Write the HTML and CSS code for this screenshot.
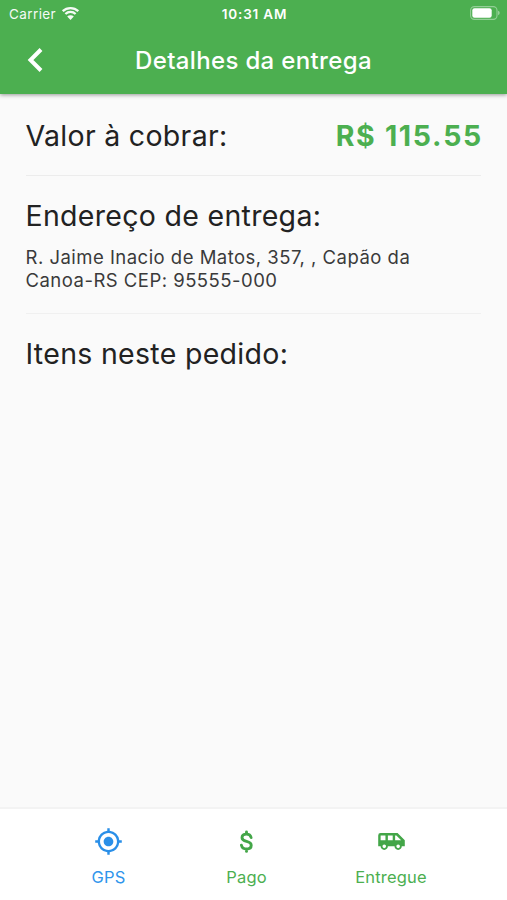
FILE: index.html
```html
<!DOCTYPE html>
<html lang="pt-BR">
<head>
    <meta charset="UTF-8">
    <meta name="viewport" content="width=device-width, initial-scale=1.0">
    <title>Detalhes da entrega</title>
    <link rel="stylesheet" href="styles.css">
</head>
<body>

<header class="topo">
    <div class="status">
        <div class="operadora">
            <span>Carrier</span>
            <svg class="wifi" viewBox="0 0 18 14">
                <path d="M1.2 5.2a11.2 11.2 0 0 1 15.6 0M3.9 8a7.3 7.3 0 0 1 10.2 0" fill="none" stroke="#fff" stroke-width="2.3"/>
                <path d="M9 14L5.7 10.6a4.7 4.7 0 0 1 6.6 0z" fill="#fff"/>
            </svg>
        </div>
        <span class="hora">10:31 AM</span>
        <svg class="bateria" viewBox="0 0 30 14">
            <rect x="0.6" y="0.6" width="26.4" height="12.8" rx="3.8" fill="none" stroke="#fff" stroke-opacity="0.4" stroke-width="1.1"/>
            <rect x="2.3" y="2.3" width="19.4" height="9.4" rx="2.2" fill="#fff"/>
            <path d="M28.2 4.8a2.4 2.4 0 0 1 0 4.4z" fill="#fff" fill-opacity="0.5"/>
        </svg>
    </div>
    <div class="barra">
        <svg class="voltar" viewBox="0 0 16 24">
            <path d="M14 1.5L3.5 12 14 22.5" fill="none" stroke="#fff" stroke-width="4"/>
        </svg>
        <h1>Detalhes da entrega</h1>
    </div>
</header>

<main>
    <section class="valor">
        <h2>Valor à cobrar:</h2>
        <strong>R$ 115.55</strong>
    </section>
    <section class="endereco">
        <h2>Endereço de entrega:</h2>
        <p>R. Jaime Inacio de Matos, 357, , Capão da<br>Canoa-RS CEP: 95555-000</p>
    </section>
    <section class="itens">
        <h2>Itens neste pedido:</h2>
    </section>
</main>

<nav>
    <a class="gps">
        <svg viewBox="0 0 24 24"><path d="M12 8c-2.21 0-4 1.79-4 4s1.79 4 4 4 4-1.79 4-4-1.79-4-4-4zm8.94 3A8.994 8.994 0 0 0 13 3.06V1h-2v2.06A8.994 8.994 0 0 0 3.06 11H1v2h2.06A8.994 8.994 0 0 0 11 20.94V23h2v-2.06A8.994 8.994 0 0 0 20.94 13H23v-2h-2.06zM12 19c-3.87 0-7-3.13-7-7s3.13-7 7-7 7 3.13 7 7-3.13 7-7 7z"/></svg>
        <span>GPS</span>
    </a>
    <a class="pago">
        <svg viewBox="0 0 24 24"><path d="M15.8 8.7C15.3 6.7 14 5.9 12 5.9c-2.3 0-3.7 1-3.7 2.9 0 4.2 7.6 2 7.6 6.300 0 2-1.5 3.1-3.9 3.1-2.3 0-3.7-1-4.2-3.1M12 5.5V4.1M12 18.5V20.2" fill="none" stroke="#43a648" stroke-width="2.4" stroke-linecap="round"/></svg>
        <span>Pago</span>
    </a>
    <a class="entregue">
        <svg viewBox="0 0 24 24"><path d="M17 5H3a2 2 0 0 0-2 2v9h2c0 1.65 1.34 3 3 3s3-1.35 3-3h5.5c0 1.65 1.34 3 3 3s3-1.35 3-3H23v-5l-6-6zM3 11V7h4v4H3zm3 6.5a1.5 1.5 0 1 1 0-3 1.5 1.5 0 0 1 0 3zm7-6.5H9V7h4v4zm4.5 6.5a1.5 1.5 0 1 1 0-3 1.5 1.5 0 0 1 0 3zM15 11V7h1l4 4h-5z"/></svg>
        <span>Entregue</span>
    </a>
</nav>

</body>
</html>
```
FILE: styles.css
```css
body {
    font-family: Inter, "Liberation Sans", sans-serif;
    margin: 0;
    height: 900px;
    display: flex;
    flex-direction: column;
    background-color: #fafafa;
    color: #222;
    overflow: hidden;
}

h1, h2, p {
    margin: 0;
    white-space: nowrap;
}

.topo {
    height: 94px;
    background-color: #4caf50;
    color: #fff;
    box-shadow: 0 1px 4px rgba(0, 0, 0, 0.4);
}

.status {
    display: grid;
    grid-template-columns: 1fr auto 1fr;
    align-items: center;
    height: 27px;
    padding: 0 7px 0 9px;
    font-size: 13.5px;
}

.operadora {
    display: flex;
    align-items: center;
    gap: 5px;
    letter-spacing: 0.4px;
    opacity: 0.95;
}

.wifi {
    width: 19px;
    height: 14px;
    margin-top: -2px;
}

.hora {
    font-size: 13.5px;
    font-weight: 600;
    letter-spacing: 0.8px;
}

.bateria {
    width: 30px;
    height: 14px;
    margin-top: -1px;
    justify-self: end;
}

.barra {
    display: grid;
    grid-template-columns: 71px 1fr 71px;
    align-items: center;
    height: 66px;
}

.voltar {
    width: 16px;
    height: 24px;
    margin-left: 27px;
}

h1 {
    font-size: 24px;
    font-weight: 500;
    letter-spacing: 0.35px;
    text-align: center;
}

main {
    flex: 1;
    padding: 0 26px 0 25.5px;
}

h2 {
    font-size: 28.5px;
    line-height: 34px;
    font-weight: 400;
    letter-spacing: 0.3px;
}

.valor {
    display: flex;
    justify-content: space-between;
    height: 56px;
    padding-top: 25px;
    border-bottom: 1px solid #ececec;
}

.valor strong {
    font-size: 28.5px;
    line-height: 34px;
    font-weight: 700;
    letter-spacing: 1.7px;
    margin-right: -2px;
    color: #4caf50;
}

.endereco {
    height: 114px;
    padding-top: 23px;
    border-bottom: 1px solid #f0f0f0;
}

.endereco p {
    margin-top: 13px;
    font-size: 18.5px;
    line-height: 23px;
    letter-spacing: 0.48px;
    color: #3a3a3a;
}

.itens {
    padding-top: 23px;
}

nav {
    display: grid;
    grid-template-columns: 134px 142px 147px;
    box-sizing: border-box;
    height: 93px;
    padding: 18px 0 0 41.5px;
    background-color: #fff;
    border-top: 2px solid #f3f3f3;
}

nav a {
    display: flex;
    flex-direction: column;
    align-items: center;
    gap: 11px;
    color: #4caf50;
    font-size: 16.5px;
    line-height: 20px;
    letter-spacing: 0.2px;
}

nav svg {
    width: 29px;
    height: 29px;
    fill: #43a648;
}

nav .gps {
    color: #2f95ec;
}

.gps svg {
    fill: #2a8fe8;
}
```
